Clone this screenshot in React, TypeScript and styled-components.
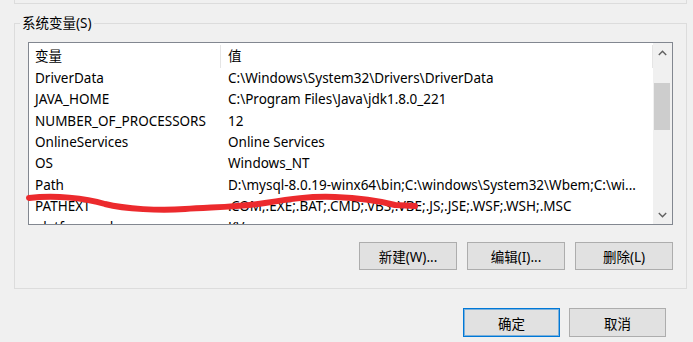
import styled, { createGlobalStyle } from 'styled-components';

const GlobalStyle = createGlobalStyle`
  html, body {
    margin: 0;
    padding: 0;
    background: #f0f0f0;
  }
  body {
    font-family: 'Noto Sans', 'Noto Sans CJK SC', sans-serif;
    font-size: 13.5px;
    color: #000;
  }
`;

const Page = styled.div`
  position: relative;
  width: 693px;
  height: 342px;
  overflow: hidden;
  display: flex;
  flex-direction: column;
`;

const TopPanel = styled.div`
  height: 3px;
  margin: 0 6px 0 14px;
  border: 1px solid #dcdcdc;
  border-top: none;
`;

const GroupBox = styled.fieldset`
  margin: 10px 6px 0 14px;
  padding: 0 13px 18px 13px;
  border: 1px solid #dcdcdc;
  min-width: 0;
`;

const Legend = styled.legend`
  margin-left: -8px;
  padding: 0 2px;
  line-height: 18px;
  font-family: 'Noto Sans', 'Noto Sans CJK SC', sans-serif;
`;

const ListBox = styled.div`
  margin-top: 10px;
  height: 181px;
  border: 1px solid #828790;
  background: #fff;
  display: flex;
  overflow: hidden;
`;

const Table = styled.div`
  flex: 1;
  display: flex;
  flex-direction: column;
  padding-top: 2px;
`;

const Row = styled.div<{ $header?: boolean }>`
  display: grid;
  grid-template-columns: 192px 1fr;
  flex: none;
  height: ${(p) => (p.$header ? '23px' : '21.33px')};
  line-height: ${(p) => (p.$header ? '23px' : '21.33px')};
  border-right: ${(p) => (p.$header ? '1px solid #e5e5e5' : '1px solid transparent')};
`;

const Cell = styled.div<{ $divider?: boolean; $value?: boolean }>`
  padding-left: ${(p) => (p.$value ? '7px' : '6px')};
  white-space: nowrap;
  overflow: hidden;
  border-right: ${(p) => (p.$divider ? '1px solid #e5e5e5' : 'none')};
`;

const ScrollBar = styled.div`
  width: 19px;
  background: #f0f0f0;
  display: flex;
  flex-direction: column;
`;

const ScrollArrow = styled.div`
  height: 19px;
  display: flex;
  align-items: center;
  justify-content: center;
  flex: none;
`;

const Track = styled.div`
  flex: 1;
  padding-top: 21px;
`;

const Thumb = styled.div`
  width: 16px;
  height: 47px;
  margin-left: 1px;
  background: #cdcdcd;
`;

const ButtonRow = styled.div<{ $outer?: boolean }>`
  display: flex;
  justify-content: flex-end;
  gap: ${(p) => (p.$outer ? '9px' : '10px')};
  margin-top: ${(p) => (p.$outer ? '19px' : '17px')};
  padding-right: ${(p) => (p.$outer ? '27px' : '0')};
`;

const Button = styled.button<{ $default?: boolean; $tall?: boolean }>`
  box-sizing: border-box;
  width: ${(p) => (p.$tall ? '97px' : '98px')};
  height: ${(p) => (p.$tall ? '29px' : '28px')};
  background: #e1e1e1;
  border: 1px solid ${(p) => (p.$default ? '#0078d7' : '#adadad')};
  box-shadow: ${(p) => (p.$default ? 'inset 0 0 0 1px rgba(0, 120, 215, 0.45)' : 'none')};
  font-family: 'Noto Sans', 'Noto Sans CJK SC', sans-serif;
  font-size: 13.5px;
  color: #000;
  padding: 0;
`;

const Scribble = styled.svg`
  position: absolute;
  left: 0;
  top: 0;
  pointer-events: none;
`;

const rows: [string, string][] = [
  ['DriverData', 'C:\\Windows\\System32\\Drivers\\DriverData'],
  ['JAVA_HOME', 'C:\\Program Files\\Java\\jdk1.8.0_221'],
  ['NUMBER_OF_PROCESSORS', '12'],
  ['OnlineServices', 'Online Services'],
  ['OS', 'Windows_NT'],
  ['Path', 'D:\\mysql-8.0.19-winx64\\bin;C:\\windows\\System32\\Wbem;C:\\wi...'],
  ['PATHEXT', '.COM;.EXE;.BAT;.CMD;.VBS;.VBE;.JS;.JSE;.WSF;.WSH;.MSC'],
  ['platformcode', 'KV'],
];

const Chevron = ({ up }: { up?: boolean }) => (
  <svg width="9" height="6" viewBox="0 0 9 6">
    <path
      d={up ? 'M0.8 5 L4.5 1.3 L8.2 5' : 'M0.8 1 L4.5 4.7 L8.2 1'}
      fill="none"
      stroke="#606060"
      strokeWidth="1.4"
    />
  </svg>
);

export default function App() {
  return (
    <Page>
      <GlobalStyle />
      <TopPanel />
      <GroupBox>
        <Legend>系统变量(S)</Legend>
        <ListBox>
          <Table>
            <Row $header>
              <Cell $divider>变量</Cell>
              <Cell $value>值</Cell>
            </Row>
            {rows.map(([name, value]) => (
              <Row key={name}>
                <Cell>{name}</Cell>
                <Cell $value>{value}</Cell>
              </Row>
            ))}
          </Table>
          <ScrollBar>
            <ScrollArrow>
              <Chevron up />
            </ScrollArrow>
            <Track>
              <Thumb />
            </Track>
            <ScrollArrow>
              <Chevron />
            </ScrollArrow>
          </ScrollBar>
        </ListBox>
        <ButtonRow>
          <Button>新建(W)...</Button>
          <Button>编辑(I)...</Button>
          <Button>删除(L)</Button>
        </ButtonRow>
      </GroupBox>
      <ButtonRow $outer>
        <Button $tall $default>
          确定
        </Button>
        <Button $tall>取消</Button>
      </ButtonRow>
      <Scribble width="693" height="342" viewBox="0 0 693 342">
        <path
          d="M29 198 C 55 195, 85 198, 105 204 C 125 209, 160 211, 185 209 C 215 207, 240 207, 265 203 C 290 199, 310 196, 335 197 C 360 198, 380 201, 395 205 L 415 206"
          fill="none"
          stroke="#ec2a2d"
          strokeWidth="6"
          strokeLinecap="round"
          strokeLinejoin="round"
        />
      </Scribble>
    </Page>
  );
}
